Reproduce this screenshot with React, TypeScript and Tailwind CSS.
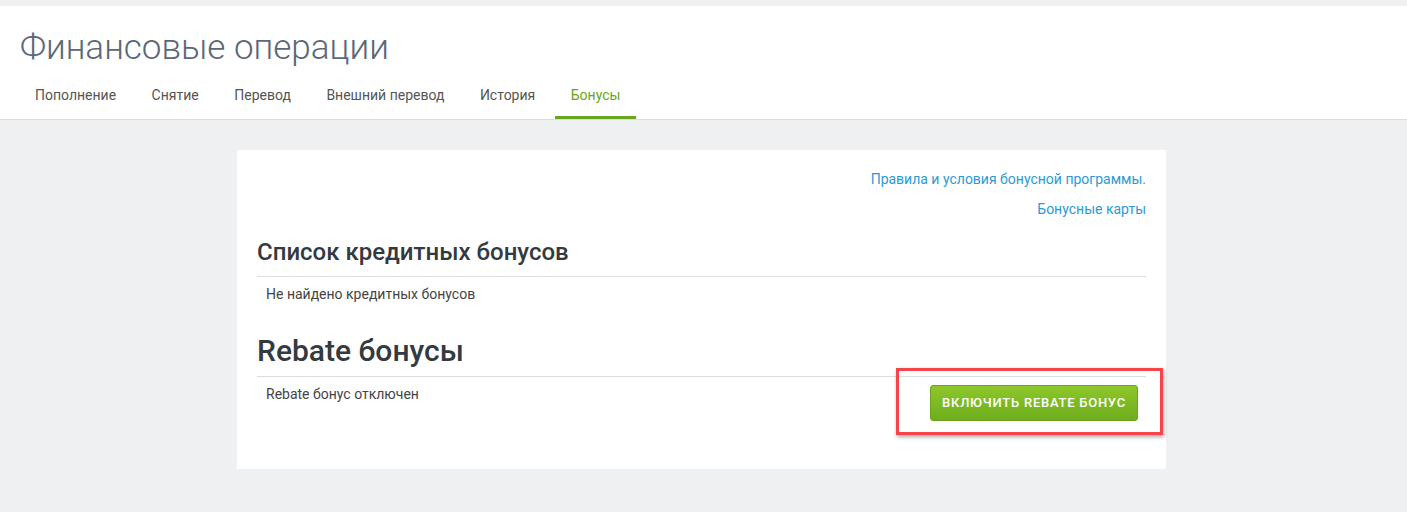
import React from "react";

const tabs = ["Пополнение", "Снятие", "Перевод", "Внешний перевод", "История", "Бонусы"];

export default function App() {
  return (
    <div className="min-h-[512px] bg-[#eff0f2] pt-[6px]" style={{ fontFamily: "Roboto, 'Noto Sans', sans-serif" }}>
      <div className="bg-white border-b border-[#dcdcdc]">
        <h1 className="pl-[20px] pt-[22px] text-[35px] font-light leading-[40px] text-[#5a6877]">Финансовые операции</h1>
        <nav className="mt-[12px] flex gap-[3.5px] pl-[19px]">
          {tabs.map((t, i) => (
            <div
              key={t}
              className={
                i === 5
                  ? "px-[16px] pt-[5px] pb-[11px] text-[14px] leading-[20px] text-[#6aa520] border-b-[3px] border-[#6aa520]"
                  : "px-[16px] pt-[5px] pb-[11px] text-[14px] leading-[20px] text-[#555] border-b-[3px] border-transparent"
              }
            >
              {t}
            </div>
          ))}
        </nav>
      </div>
      <div className="pt-[30px] pb-[44px] flex justify-center">
        <div className="ml-[-4px] w-[929px] bg-white px-[20px] pt-[19px] pb-[48px]">
          <div className="flex flex-col items-end gap-[10px] text-[14px] leading-[20px] text-[#2b9ad5]">
            <span>Правила и условия бонусной программы.</span>
            <span>Бонусные карты</span>
          </div>
          <h2 className="mt-[18px] pb-[9px] text-[24px] font-medium leading-[30px] text-[#333a40] border-b border-[#dddddd]">
            Список кредитных бонусов
          </h2>
          <p className="mt-[7px] pl-[9px] text-[14px] leading-[20px] text-[#444]">Не найдено кредитных бонусов</p>
          <h2 className="mt-[29px] pb-[7px] text-[30px] font-medium leading-[36px] text-[#333a40] border-b border-[#dddddd]">
            Rebate бонусы
          </h2>
          <div className="flex items-start justify-between">
            <p className="mt-[7px] pl-[9px] text-[14px] leading-[20px] text-[#444]">Rebate бонус отключен</p>
            <div className="relative mr-[8px] mt-[8px]">
              <button className="h-[36px] w-[208px] rounded-[3px] border border-[#6aa31d] bg-gradient-to-b from-[#8ec72b] to-[#6ead1c] text-[13px] font-medium uppercase tracking-[0.75px] text-white">
                Включить Rebate бонус
              </button>
              <div className="pointer-events-none absolute left-[-34px] top-[-17px] h-[67px] w-[267px] border-[3px] border-[#f6454a] shadow-[1px_2px_4px_rgba(0,0,0,0.35)]" />
            </div>
          </div>
        </div>
      </div>
    </div>
  );
}
